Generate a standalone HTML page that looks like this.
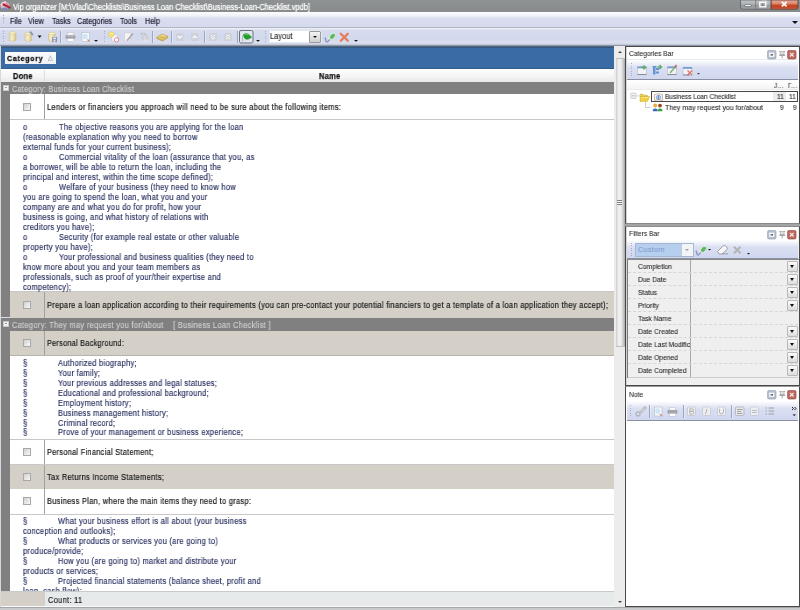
<!DOCTYPE html>
<html><head><meta charset="utf-8">
<style>
*{margin:0;padding:0;box-sizing:border-box}
html,body{width:800px;height:610px;overflow:hidden;background:#d9deee}
body{position:relative;font-family:"Liberation Sans",sans-serif;font-size:8.5px;color:#222}
.a{position:absolute}
.t{position:absolute;white-space:pre;line-height:10px;letter-spacing:.35px;transform:scaleX(.876);transform-origin:0 0;will-change:transform;-webkit-text-stroke:.18px currentColor}
/* title */
#title{left:0;top:0;width:800px;height:12px;background:linear-gradient(#8e9292,#878b8b)}
#menu{left:0;top:12px;width:800px;height:15px;background:linear-gradient(#fdfdfe 0,#f0f2f9 3.5px,#d8ddef 6.5px,#d4d9ed 15px)}
#tool{left:0;top:27px;width:800px;height:19.5px;background:linear-gradient(#b0b6c6 0,#b0b6c6 1px,#eceef6 1.5px,#d6dbee 3.5px,#d3d9ed 12px,#dcdff0 16px,#c4cad8 17.5px,#54657e 19.5px)}
.grip{position:absolute;width:1.2px;background:repeating-linear-gradient(#a4acc0 0 1px,transparent 1px 2.5px)}
.sep{position:absolute;width:1px;background:#9ea6ba;box-shadow:1px 0 0 rgba(255,255,255,.35)}
/* main */
#blue{left:1px;top:46.5px;width:613px;height:22.5px;background:#3a6ba4;border-top:1px solid #34587f;border-bottom:1px solid #325e90}
#hdr{left:1px;top:69px;width:613px;height:13px;background:linear-gradient(#fefefe,#f4f4f4 60%,#e9e9e9)}
.grp{position:absolute;left:1px;width:613px;height:13px;background:#808080;color:#cfcfcf}
.row{position:absolute;left:10px;width:604px;border-bottom:1px solid #c8c8c8}
.row .vl{position:absolute;left:34px;top:0;bottom:0;width:1px;background:#a0a0a0}
.cb{position:absolute;left:13px;width:8px;height:8px;border:1px solid #a8a8a8;background:linear-gradient(135deg,#d0d0d0,#f8f8f8)}
.notes{position:absolute;left:10px;width:604px;background:#fff;color:#2a3160}
.strip{position:absolute;left:1px;width:9px;background:#808080}
</style></head><body>

<!-- Title bar -->
<div id="title" class="a"></div>
<svg class="a" style="left:0;top:0" width="14" height="12">
<ellipse cx="5" cy="5.5" rx="4.5" ry="3.5" fill="#e8c8d8" opacity=".85"/>
<path d="M1 5 q2 -3 5 -3" stroke="#f4dce8" stroke-width="1.5" fill="none"/>
<path d="M3.5 4.5 l6 3" stroke="#a82838" stroke-width="2.2" stroke-linecap="round"/>
<path d="M6 3.5 l3.5 2" stroke="#e08088" stroke-width="1.2" stroke-linecap="round"/>
<ellipse cx="4.8" cy="8.6" rx="2.8" ry="1.2" fill="#7a88c8"/>
</svg>
<div class="t" style="left:13px;top:1.5px;font-size:8.5px;letter-spacing:0;transform:scaleX(.877);color:#fff;line-height:10px;text-shadow:0 0 2px rgba(255,255,255,.35)">Vip organizer [M:\Vlad\Checklists\Business Loan Checklist\Business-Loan-Checklist.vpdb]</div>
<svg class="a" style="left:736px;top:0" width="64" height="12">
<defs>
<linearGradient id="wb" x1="0" x2="0" y1="0" y2="1"><stop offset="0" stop-color="#c4c7c9"/><stop offset=".5" stop-color="#a9adb0"/><stop offset=".55" stop-color="#94989b"/><stop offset="1" stop-color="#a2a6a8"/></linearGradient>
<linearGradient id="wc" x1="0" x2="0" y1="0" y2="1"><stop offset="0" stop-color="#e8b0a2"/><stop offset=".45" stop-color="#d88068"/><stop offset=".55" stop-color="#c44422"/><stop offset=".85" stop-color="#c84a2a"/><stop offset="1" stop-color="#d87a5a"/></linearGradient>
</defs>
<path d="M4.5 0 v6.8 q0 2.4 2.4 2.4 h28.3 v-9.2 z" fill="url(#wb)" stroke="#5c6063" stroke-width=".8"/>
<path d="M35.2 0 v9.2 h24.6 q2.2 0 2.2 -2.2 v-7 z" fill="url(#wc)" stroke="#5a3830" stroke-width=".8"/>
<path d="M19.6 0 v9.2" stroke="#6a6e70" stroke-width=".7"/>
<rect x="8.8" y="4.6" width="6.2" height="2" rx=".6" fill="#fff" stroke="#4a4e52" stroke-width=".6"/>
<rect x="23.8" y="2.2" width="6" height="4.6" fill="none" stroke="#fff" stroke-width="1.3"/>
<path d="M25.3 1 h5.5 v4" fill="none" stroke="#dfe0e0" stroke-width=".7"/>
<path d="M26.8 3 v3" stroke="#666" stroke-width=".6"/>
<path d="M45.8 1.8 l4.8 4.6 M50.6 1.8 l-4.8 4.6" stroke="#fff" stroke-width="1.6"/>
</svg>

<!-- Menu -->
<div id="menu" class="a"></div>
<div class="grip" style="left:3px;top:15px;height:10px"></div>
<div class="t" style="left:9.6px;top:16px;font-size:8.5px;letter-spacing:0;transform:scaleX(.856);color:#1e1e2e">File</div>
<div class="t" style="left:28.3px;top:16px;font-size:8.5px;letter-spacing:0;transform:scaleX(.856);color:#1e1e2e">View</div>
<div class="t" style="left:51.6px;top:16px;font-size:8.5px;letter-spacing:0;transform:scaleX(.856);color:#1e1e2e">Tasks</div>
<div class="t" style="left:76.9px;top:16px;font-size:8.5px;letter-spacing:0;transform:scaleX(.856);color:#1e1e2e">Categories</div>
<div class="t" style="left:119.6px;top:16px;font-size:8.5px;letter-spacing:0;transform:scaleX(.856);color:#1e1e2e">Tools</div>
<div class="t" style="left:145px;top:16px;font-size:8.5px;letter-spacing:0;transform:scaleX(.856);color:#1e1e2e">Help</div>
<div class="a" style="left:792px;top:21px;width:0;height:0;border-left:3px solid transparent;border-right:3px solid transparent;border-top:3px solid #111"></div>

<!-- Toolbar -->
<div id="tool" class="a"></div>
<div class="grip" style="left:3px;top:31px;height:12px"></div>
<div class="grip" style="left:104px;top:31px;height:12px"></div>
<div class="grip" style="left:265px;top:31px;height:12px"></div>
<div class="sep" style="left:60px;top:31px;height:12px"></div>
<div class="sep" style="left:152px;top:31px;height:12px"></div>
<div class="sep" style="left:171px;top:31px;height:12px"></div>
<div class="sep" style="left:204px;top:31px;height:12px"></div>
<div class="sep" style="left:237px;top:31px;height:12px"></div>
<svg class="a" style="left:0;top:0" width="800" height="46">
<defs>
<linearGradient id="db" x1="0" x2="1" y1="0" y2="0"><stop offset="0" stop-color="#e4d69c"/><stop offset=".4" stop-color="#fcf6d0"/><stop offset="1" stop-color="#d4bc70"/></linearGradient>
<linearGradient id="gb" x1="0" x2="0" y1="0" y2="1"><stop offset="0" stop-color="#e8e8ea"/><stop offset="1" stop-color="#b8bac2"/></linearGradient>
<linearGradient id="pg" x1="0" x2="1" y1="0" y2="1"><stop offset="0" stop-color="#fff"/><stop offset="1" stop-color="#b8d8f0"/></linearGradient>
</defs>
<!-- db 1 -->
<g opacity=".9">
<path d="M9.3 33 v7.3 q3.3 2 6.6 0 v-7.3" fill="url(#db)" stroke="#c8b474" stroke-width=".5"/>
<ellipse cx="12.6" cy="33" rx="3.3" ry="1.3" fill="#fbf4c4" stroke="#c8b474" stroke-width=".5"/>
<path d="M9.5 35.8 q3.1 1.6 6.2 0 M9.5 38.3 q3.1 1.6 6.2 0" stroke="#e8d8a0" stroke-width=".5" fill="none"/>
<!-- db 2 -->
<path d="M25 33.5 v7 q3.3 2 6.6 0 v-7" fill="url(#db)" stroke="#c8b474" stroke-width=".5"/>
<ellipse cx="28.3" cy="33.5" rx="3.3" ry="1.3" fill="#fbf4c4" stroke="#c8b474" stroke-width=".5"/>
<path d="M25.2 36.3 q3.1 1.6 6.2 0 M25.2 38.8 q3.1 1.6 6.2 0" stroke="#e8d8a0" stroke-width=".5" fill="none"/>
<path d="M29.5 32.3 l1.2 -1 l2.6 3 l-1.1 1 z" fill="#7a94c0" stroke="#5a6a90" stroke-width=".3"/>
</g>
<path d="M37.6 35.5 h4 l-2 2.5 z" fill="#111"/>
<!-- db save -->
<g opacity=".9">
<path d="M48.5 33.5 v7 q3.3 2 6.6 0 v-7" fill="url(#db)" stroke="#c8b474" stroke-width=".5"/>
<ellipse cx="51.8" cy="33.5" rx="3.3" ry="1.3" fill="#fbf4c4" stroke="#c8b474" stroke-width=".5"/>
<path d="M48.7 36.3 q3.1 1.6 6.2 0 M48.7 38.8 q3.1 1.6 6.2 0" stroke="#e8d8a0" stroke-width=".5" fill="none"/>
<rect x="52.3" y="37.3" width="4.6" height="4.6" fill="#8a90b8" stroke="#6a7098" stroke-width=".4"/><rect x="53.2" y="37.6" width="2.8" height="1.6" fill="#e8e8f4"/><rect x="53.6" y="40.2" width="1.8" height="1.4" fill="#fff"/>
</g>
<!-- printer -->
<rect x="67.3" y="32.5" width="6.4" height="3" fill="#fbfbfb" stroke="#b8b8c0" stroke-width=".5"/>
<rect x="65.8" y="35.3" width="9.4" height="3.2" rx=".8" fill="#9a9ca4" stroke="#8a8c94" stroke-width=".4"/>
<rect x="66.2" y="35.5" width="8.6" height="1" fill="#c8cad0"/>
<rect x="67.3" y="38.5" width="6.4" height="3" fill="#fff" stroke="#b8b8c0" stroke-width=".5"/>
<!-- page preview -->
<rect x="82" y="32.5" width="7.5" height="9" fill="#f4f8fc" stroke="#a8b4c0" stroke-width=".5"/>
<ellipse cx="85.2" cy="36.5" rx="2.5" ry="2.8" fill="#cfe4f4"/>
<path d="M87.5 39.5 l2 2" stroke="#d09060" stroke-width="1.2"/>
<path d="M94 40 h4 l-2 1.8 z" fill="#111"/>
<!-- new category -->
<rect x="112" y="35" width="5" height="6" fill="#fff" stroke="#c0c8d8" stroke-width=".5"/>
<circle cx="111.3" cy="34.5" r="2.8" fill="#f4e07a" stroke="#d8c050" stroke-width=".4"/>
<path d="M109.5 34 q2 -1.5 3.5 0" stroke="#fff8c0" stroke-width=".8" fill="none"/>
<circle cx="116.5" cy="39.8" r="2.2" fill="#fff" stroke="#e08898" stroke-width="1"/>
<!-- edit grayed -->
<rect x="124.5" y="33" width="6" height="8" fill="#f4f4f4" stroke="#c8c8cc" stroke-width=".5"/>
<path d="M126.5 40 l6 -7 l1.2 1 l-6 7 z" fill="#a8a8ac"/>
<!-- grayed icon -->
<path d="M140.5 34.5 l2 -1.5 M143.5 33 l2 1" stroke="#b8b8bc" stroke-width="1.2"/>
<circle cx="145" cy="37.5" r="2.6" fill="#d8d8dc" stroke="#b4b4b8" stroke-width=".6"/>
<ellipse cx="145" cy="40.5" rx="2.2" ry="1.2" fill="#e4e4e8"/>
<!-- yellow layered -->
<path d="M157 37 l5 -3 l5.5 2.2 l-5 3.2 z" fill="#f0dc88" stroke="#b89848" stroke-width=".6"/>
<path d="M157 37 v1.5 l5.5 2.5 l5 -3.2 v-1.6" fill="#dcc060" stroke="#a88838" stroke-width=".6"/>
<path d="M159.5 36 l5 2" stroke="#c0a050" stroke-width=".5"/>
<!-- chevron boxes -->
<rect x="176" y="33" width="7.5" height="8" rx="1.5" fill="#cfd1d8"/>
<path d="M177.8 36 l2 2 l2 -2" fill="none" stroke="#fff" stroke-width="1.1"/>
<rect x="191" y="33" width="7.5" height="8" rx="1.5" fill="#cfd1d8"/>
<path d="M192.8 38 l2 -2 l2 2" fill="none" stroke="#fff" stroke-width="1.1"/>
<rect x="209" y="33" width="8" height="8" rx="1.5" fill="#cfd1d8"/>
<path d="M211 35 l2 1.6 l2 -1.6 M211 37.5 l2 1.6 l2 -1.6" fill="none" stroke="#fff" stroke-width=".9"/>
<rect x="224" y="33" width="8" height="8" rx="1.5" fill="#cfd1d8"/>
<path d="M226 36.6 l2 -1.6 l2 1.6 M226 39.1 l2 -1.6 l2 1.6" fill="none" stroke="#fff" stroke-width=".9"/>
<!-- pressed button -->
<rect x="239.5" y="30.5" width="13.5" height="12.5" rx="1.5" fill="#e2e6ee" stroke="#6c7080" stroke-width="1"/>
<path d="M242.6 41.5 v-5 q0 -1.5 1.2 -2" stroke="#a8b0a8" stroke-width=".9" fill="none"/>
<path d="M243.5 34.5 q2.5 -2 5 -.2 l3.3 3 q-1.5 .8 -3.2 1.8 q-1.8 .6 -3.4 -.3 q-1.8 -1.5 -1.7 -4.3 z" fill="#20a028" stroke="#187a20" stroke-width=".4"/>
<path d="M244.5 34.8 q2 -1.2 3.8 .2" stroke="#80d888" stroke-width=".8" fill="none"/>
<path d="M256 40 h4 l-2 1.8 z" fill="#111"/>
<!-- key/pen -->
<g transform="translate(323,28)"><path d="M2 9.5 l1.2 4 q.5 1 1.5 .3 l2.5 -3" fill="none" stroke="#8890b8" stroke-width="1.3"/>
<path d="M5.5 9.5 l2 2" stroke="#e8ecf4" stroke-width="1.2"/>
<ellipse cx="9.5" cy="8.3" rx="2.3" ry="3.6" transform="rotate(40 9.5 8.3)" fill="#5cb860" stroke="#e0f0e0" stroke-width=".8"/>
<path d="M9 5.5 q1.5 -1 2.8 .5" stroke="#d8e8f0" stroke-width=".9" fill="none"/></g>
<!-- red x -->
<path d="M340.8 33.8 l7 7 M347.8 33.8 l-7 7" stroke="#e87a5c" stroke-width="2.3" stroke-linecap="round"/>
<path d="M354 40 h4 l-2 1.8 z" fill="#111"/>
</svg>
<div class="a" style="left:268.5px;top:30.2px;width:53px;height:12.6px;background:#fff;border:1px solid #e4e8f2"></div>
<div class="t" style="left:270px;top:31.8px;font-size:8.2px;letter-spacing:.2px;color:#333">Layout</div>
<div class="a" style="left:309px;top:30.5px;width:12px;height:12px;background:linear-gradient(#f4f4f4,#d0d0d0);border:1px solid #9a9a9a;border-radius:1px"></div>
<div class="a" style="left:313px;top:35.5px;width:0;height:0;border-left:2.2px solid transparent;border-right:2.2px solid transparent;border-top:2.6px solid #111"></div>

<!-- Main grid -->
<div class="a" style="left:0;top:46px;width:1.2px;height:561px;background:#d8d8d8"></div>
<div id="blue" class="a"></div>
<div class="a" style="left:5px;top:52px;width:51px;height:12px;background:linear-gradient(#f8fafc,#eef1f5);"></div>
<div class="t" style="left:6.5px;top:53.5px;font-weight:bold;font-size:8px;letter-spacing:.85px;color:#111;-webkit-text-stroke:.3px #111">Category</div>
<div class="t" style="left:47.5px;top:53px;font-size:7px;color:#9aa">△</div>
<div id="hdr" class="a"></div>
<div class="a" style="left:44px;top:70px;width:1px;height:11px;background:#dcdcdc"></div>
<div class="t" style="left:12.5px;top:71px;font-weight:bold;font-size:8.5px;color:#111;-webkit-text-stroke:.25px #111">Done</div>
<div class="t" style="left:318.8px;top:71px;font-weight:bold;font-size:8.5px;color:#111;-webkit-text-stroke:.25px #111">Name</div>

<!-- group 1 -->
<div class="grp" style="top:82px"></div>
<div class="a" style="left:3px;top:85px;width:5.5px;height:5.5px;background:#f2f2f2;border:.6px solid #c8c8c8"></div>
<div class="a" style="left:4.5px;top:87.3px;width:2.5px;height:1px;background:#999"></div>
<div class="t" style="left:12px;top:84px;transform:scaleX(.853);color:#cdcdcd">Category: Business Loan Checklist</div>
<div class="strip" style="top:94px;height:223px"></div>

<div class="row" style="top:94px;height:26px;background:#fff"><div class="vl"></div></div>
<div class="cb" style="top:103px;left:23px"></div>
<div class="t" style="left:46.5px;top:102.0px;color:#151515">Lenders or financiers you approach will need to be sure about the following items:</div>

<div class="notes" style="top:120px;height:172px;border-bottom:1px solid #c8c8c8"></div>
<div class="t" style="left:23.3px;top:121.5px;line-height:9.98px;color:#2a3160">o
(reasonable explanation why you need to borrow
external funds for your current business);
o
a borrower, will be able to return the loan, including the
principal and interest, within the time scope defined);
o
you are going to spend the loan, what you and your
company are and what you do for profit, how your
business is going, and what history of relations with
creditors you have);
o
property you have);
o
know more about you and your team members as
professionals, such as proof of your/their expertise and
competency);</div>
<div class="t" style="left:58.5px;top:121.5px;line-height:9.98px;color:#2a3160">The objective reasons you are applying for the loan


Commercial vitality of the loan (assurance that you, as


Welfare of your business (they need to know how




Security (for example real estate or other valuable

Your professional and business qualities (they need to</div>

<div class="row" style="top:292px;height:26px;background:#d4d0c8;border-bottom:none"><div class="vl"></div></div>
<div class="cb" style="top:301px;left:23px"></div>
<div class="t" style="left:46.5px;top:300.0px;color:#151515">Prepare a loan application according to their requirements (you can pre-contact your potential financiers to get a template of a loan application they accept);</div>

<!-- group 2 -->
<div class="grp" style="top:317.5px"></div>
<div class="a" style="left:3px;top:321px;width:5.5px;height:5.5px;background:#f2f2f2;border:.6px solid #c8c8c8"></div>
<div class="a" style="left:4.5px;top:323.3px;width:2.5px;height:1px;background:#999"></div>
<div class="t" style="left:12px;top:320px;color:#cdcdcd">Category: They may request you for/about    [ Business Loan Checklist ]</div>
<div class="strip" style="top:330.5px;height:260px"></div>

<div class="row" style="top:330.5px;height:25px;background:#d4d0c8;border-bottom:1px solid #b8b4ac"><div class="vl"></div></div>
<div class="cb" style="top:339px;left:23px"></div>
<div class="t" style="left:46.5px;top:338.0px;transform:scaleX(.851);color:#151515">Personal Background:</div>

<div class="notes" style="top:355.5px;height:84px;border-bottom:1px solid #c8c8c8"></div>
<div class="t" style="left:23.3px;top:358.5px;line-height:9.92px;color:#2a3160">§
§
§
§
§
§
§
§</div>
<div class="t" style="left:58px;top:358.5px;line-height:9.92px;color:#2a3160">Authorized biography;
Your family;
Your previous addresses and legal statuses;
Educational and professional background;
Employment history;
Business management history;
Criminal record;
Prove of your management or business experience;</div>

<div class="row" style="top:439.5px;height:25px;background:#fff"><div class="vl"></div></div>
<div class="cb" style="top:448px;left:23px"></div>
<div class="t" style="left:46.5px;top:447.0px;transform:scaleX(.864);color:#151515">Personal Financial Statement;</div>

<div class="row" style="top:464.5px;height:24.5px;background:#d4d0c8;border-bottom:none"><div class="vl"></div></div>
<div class="cb" style="top:472.5px;left:23px"></div>
<div class="t" style="left:46.5px;top:471.5px;color:#151515">Tax Returns Income Statements;</div>

<div class="row" style="top:489px;height:25.5px;background:#fff"><div class="vl"></div></div>
<div class="cb" style="top:497px;left:23px"></div>
<div class="t" style="left:46.5px;top:496.0px;transform:scaleX(.874);color:#151515">Business Plan, where the main items they need to grasp:</div>

<div class="notes" style="top:514.5px;height:76px;overflow:hidden">
<div class="t" style="left:13.3px;top:2.5px;line-height:9.95px;color:#2a3160">§
conception and outlooks);
§
produce/provide;
§
products or services;
§
loan, cash flow);</div>
<div class="t" style="left:48px;top:2.5px;line-height:9.95px;color:#2a3160">What your business effort is all about (your business

What products or services you (are going to)

How you (are going to) market and distribute your

Projected financial statements (balance sheet, profit and</div>
</div>

<!-- footer -->
<div class="a" style="left:1px;top:591px;width:613px;height:16px;background:#e6eaea;border-top:1px solid #c6caca;border-bottom:1px solid #fafafa"></div>
<div class="a" style="left:1px;top:592px;width:44px;height:14px;background:#d4d0c8"></div>
<div class="t" style="left:47.5px;top:595px;color:#222">Count: 11</div>
<div class="a" style="left:0;top:607px;width:800px;height:3px;background:linear-gradient(#a4a6a8 0,#a4a6a8 1px,#c8cacb 1px)"></div>

<!-- scrollbar -->
<div class="a" style="left:614px;top:46px;width:11px;height:561px;background:#ececec"></div>
<div class="a" style="left:618px;top:50.5px;width:0;height:0;border-left:2.5px solid transparent;border-right:2.5px solid transparent;border-bottom:2.5px solid #444"></div>
<div class="a" style="left:615.5px;top:58.3px;width:9px;height:289px;background:linear-gradient(90deg,#cfcfcf,#f4f4f4 35%,#e2e2e2 65%,#a8a8a8);border-top:1px solid #c0c0c0;border-bottom:1px solid #c0c0c0"></div>
<div class="a" style="left:617px;top:200px;width:4.5px;height:5px;background:repeating-linear-gradient(#808080 0 1px,#f8f8f8 1px 2px)"></div>
<div class="a" style="left:618px;top:600.5px;width:0;height:0;border-left:2.5px solid transparent;border-right:2.5px solid transparent;border-top:2.5px solid #444"></div>

<!-- right panels -->
<div class="a" style="left:625px;top:46px;width:175px;height:561px;background:#a2a4a6"></div>

<!-- categories bar -->
<div class="a" style="left:625px;top:45.8px;width:175px;height:178.2px;background:#fff;border:1px solid #484848;border-bottom-color:#8a8a8a;border-width:1px 1.5px 1.2px 1.2px;box-shadow:inset 1px 0 0 #d4d4d4"></div>
<div class="a" style="left:627px;top:59px;width:171px;height:1px;background:#e8eaf0"></div>
<div class="t" style="left:629px;top:49px;font-size:7.2px;-webkit-text-stroke:.05px currentColor;letter-spacing:0;transform:scaleX(.93);color:#1a1a1a">Categories Bar</div>
<svg class="a" style="left:760px;top:49.5px" width="40" height="12">
<rect x="7.6" y="0.4" width="8.4" height="8.6" rx="1.3" fill="#b6bfcc" stroke="#98a2b2" stroke-width=".7"/>
<rect x="9.6" y="3" width="4.4" height="3.6" fill="#f4f6f8" stroke="#fff" stroke-width=".6"/>
<rect x="10.6" y="4.2" width="2.4" height="1.3" fill="#404850"/>
<path d="M19.3 1.6 h5.8" stroke="#9a9a9a" stroke-width="1"/>
<path d="M20.4 1.6 v3.4 h3.6 v-3.4" fill="#e4e4e4" stroke="#a8a8a8" stroke-width=".7"/>
<path d="M19.2 5.2 h6" stroke="#808080" stroke-width=".9"/>
<path d="M22.2 5.2 v3.2" stroke="#9a9a9a" stroke-width=".9"/>
<rect x="27.6" y="0.4" width="8.4" height="8.6" rx="1.3" fill="#bb6a62" stroke="#9c5048" stroke-width=".7"/>
<path d="M30 2.9 l3.6 3.6 M33.6 2.9 l-3.6 3.6" stroke="#f8e8e8" stroke-width="1.2"/>
</svg>
<div class="a" style="left:627px;top:60px;width:171px;height:19.5px;background:linear-gradient(#ffffff 0,#f4f6fb 12%,#dadff2 40%,#d0d7ef 100%);border-bottom:1px solid #8890a2"></div>
<div class="grip" style="left:631px;top:63px;height:14px"></div>
<svg class="a" style="left:626px;top:58px;opacity:.8" width="80" height="22">
<rect x="11.5" y="9" width="9" height="7.5" fill="#f8f8fa" stroke="#9aa4b0" stroke-width=".5"/><rect x="11.5" y="8.5" width="9" height="1.8" fill="#5a8ac8"/><rect x="11.5" y="16" width="9" height="1" fill="#707880"/>
<path d="M15.5 9.5 h3.5 M17.5 7.5 l2 2 l-2 2" stroke="#3aa040" stroke-width="1.3" fill="none"/>
<rect x="27" y="9" width="2.5" height="7.5" fill="#4a80c8"/><rect x="30" y="10" width="3" height="2" fill="#4a80c8"/><rect x="30" y="13.5" width="3" height="2" fill="#4a80c8"/><rect x="26.5" y="8" width="4" height="1.5" fill="#4a80c8"/>
<path d="M31.5 9 h3.5 M33.5 7 l2 2 l-2 2" stroke="#3aa040" stroke-width="1.3" fill="none"/>
<rect x="41.5" y="9" width="9" height="7.5" fill="#f8f8fa" stroke="#9aa4b0" stroke-width=".5"/><rect x="41.5" y="8.5" width="9" height="1.8" fill="#5a8ac8"/><rect x="41.5" y="16" width="9" height="1" fill="#707880"/>
<path d="M44 15 l6.5 -7.5" stroke="#68a848" stroke-width="1.4"/><path d="M48.5 9.5 l2 -2.5" stroke="#c84848" stroke-width="1.4"/>
<rect x="57" y="9.5" width="9" height="7.5" fill="#f8f8fa" stroke="#9aa4b0" stroke-width=".5"/><rect x="57" y="9" width="9" height="1.8" fill="#5a8ac8"/><rect x="57" y="16.5" width="7" height="1" fill="#707880"/>
<path d="M61.5 12.5 l4.5 4.5 M66 12.5 l-4.5 4.5" stroke="#e05040" stroke-width="1.1"/>
<path d="M71 15 h3 l-1.5 1.5 z" fill="#111"/>
</svg>
<div class="a" style="left:627px;top:80px;width:171px;height:10px;background:linear-gradient(#fff,#f3f3f3)"></div>
<div class="a" style="left:627px;top:89.3px;width:171px;height:1px;background:#ececec"></div>

<div class="t" style="left:774px;top:81px;font-size:7.2px;-webkit-text-stroke:.05px currentColor;color:#333">J...</div>
<div class="t" style="left:787.5px;top:81px;font-size:7.2px;-webkit-text-stroke:.05px currentColor;color:#333">Γ...</div>
<div class="a" style="left:651px;top:90.5px;width:147px;height:11px;border:1px solid #484848;background:#fff"></div>
<div class="a" style="left:773px;top:91.5px;width:13px;height:9px;background:#ececec"></div>
<div class="t" style="left:664.8px;top:92px;font-size:7.3px;-webkit-text-stroke:.08px currentColor;letter-spacing:0;transform:scaleX(.89);color:#222">Business Loan Checklist</div>
<div class="t" style="left:777px;top:92px;font-size:7.3px;-webkit-text-stroke:.08px currentColor;color:#222">11</div>
<div class="t" style="left:789px;top:92px;font-size:7.3px;-webkit-text-stroke:.08px currentColor;color:#222">11</div>
<div class="t" style="left:665px;top:103px;font-size:7.3px;-webkit-text-stroke:.08px currentColor;letter-spacing:0;transform:scaleX(.95);color:#222">They may request you for/about</div>
<div class="t" style="left:780px;top:103px;font-size:7.3px;-webkit-text-stroke:.08px currentColor;color:#222">9</div>
<div class="t" style="left:793px;top:103px;font-size:7.3px;-webkit-text-stroke:.08px currentColor;color:#222">9</div>
<svg class="a" style="left:626px;top:86px" width="40" height="30">
<rect x="4.8" y="7.2" width="5.2" height="5.2" rx=".6" fill="#f8f8f8" stroke="#b4b4b4" stroke-width=".7"/>
<path d="M6.2 9.8 h2.4" stroke="#999" stroke-width=".8"/>
<path d="M10.2 9.8 h3.5" stroke="#c8c8c8" stroke-width=".6"/>
<path d="M14 8 h2.8 l1 1 h3.5 v2 h-7.3 z" fill="#e8d060" stroke="#c8a830" stroke-width=".4"/>
<path d="M14 10.5 h9.5 l-2 5 h-7.5 z" fill="#f0d040" stroke="#c8a020" stroke-width=".4"/>
<path d="M15 11.5 h7" stroke="#fff0a0" stroke-width=".7"/>
<path d="M28.5 8.5 q4 -1.5 8 0 v6 q-4 -1.5 -8 0 z" fill="#f6f8fc" stroke="#c89868" stroke-width=".7"/>
<circle cx="32.5" cy="11.5" r="2.2" fill="#b8d0f0" stroke="#5a88c8" stroke-width=".6"/>
<path d="M32.5 9.3 v4.4" stroke="#4878c0" stroke-width=".7"/>
<path d="M19.5 16 v5.5 h5" stroke="#b8b8b8" stroke-width=".7" fill="none"/>
<circle cx="29.2" cy="19.5" r="1.9" fill="#e8a838"/><path d="M26.8 25.2 v-1.5 q2.4 -2.6 4.8 0 v1.5 z" fill="#3a62c0"/>
<circle cx="34" cy="19.6" r="1.9" fill="#904a28"/><path d="M31.6 25.2 v-1.5 q2.4 -2.6 4.8 0 v1.5 z" fill="#38a040"/>
</svg>

<!-- filters bar -->
<div class="a" style="left:625px;top:226.3px;width:175px;height:159.7px;background:#efefef;border:1px solid #484848;border-top-color:#8c8c8c;border-width:1px 1.5px 1.5px 1.2px;box-shadow:inset 1px 0 0 #d4d4d4"></div>
<div class="a" style="left:627px;top:227px;width:171px;height:13px;background:#fff"></div>
<div class="a" style="left:627px;top:239.5px;width:171px;height:1px;background:#e8eaf0"></div>
<div class="t" style="left:629px;top:228.7px;font-size:7.2px;-webkit-text-stroke:.05px currentColor;letter-spacing:0;transform:scaleX(.93);color:#1a1a1a">Filters Bar</div>
<svg class="a" style="left:760px;top:229.5px" width="40" height="12">
<rect x="7.6" y="0.4" width="8.4" height="8.6" rx="1.3" fill="#b6bfcc" stroke="#98a2b2" stroke-width=".7"/>
<rect x="9.6" y="3" width="4.4" height="3.6" fill="#f4f6f8" stroke="#fff" stroke-width=".6"/>
<rect x="10.6" y="4.2" width="2.4" height="1.3" fill="#404850"/>
<path d="M19.3 1.6 h5.8" stroke="#9a9a9a" stroke-width="1"/>
<path d="M20.4 1.6 v3.4 h3.6 v-3.4" fill="#e4e4e4" stroke="#a8a8a8" stroke-width=".7"/>
<path d="M19.2 5.2 h6" stroke="#808080" stroke-width=".9"/>
<path d="M22.2 5.2 v3.2" stroke="#9a9a9a" stroke-width=".9"/>
<rect x="27.6" y="0.4" width="8.4" height="8.6" rx="1.3" fill="#bb6a62" stroke="#9c5048" stroke-width=".7"/>
<path d="M30 2.9 l3.6 3.6 M33.6 2.9 l-3.6 3.6" stroke="#f8e8e8" stroke-width="1.2"/>
</svg>
<div class="a" style="left:627px;top:240px;width:171px;height:19px;background:linear-gradient(#ffffff 0,#f4f6fb 12%,#dadff2 40%,#d0d7ef 100%);border-bottom:1px solid #8890a2"></div>
<div class="grip" style="left:631px;top:243px;height:14px"></div>
<div class="a" style="left:635px;top:243px;width:59px;height:14px;background:#b6cfee;border:1px solid #a4b8d4"></div>
<div class="a" style="left:681px;top:244px;width:12px;height:12px;background:#f2f4f8;border-left:1px solid #c4cad8"></div>
<div class="a" style="left:685px;top:249px;width:0;height:0;border-left:2px solid transparent;border-right:2px solid transparent;border-top:2.5px solid #a0a0a0"></div>
<div class="t" style="left:637.5px;top:245px;font-size:8px;-webkit-text-stroke:.08px currentColor;letter-spacing:.2px;transform:scaleX(.93);color:#7e9acc">Custom</div>
<svg class="a" style="left:694px;top:240px" width="60" height="20">
<g transform="translate(0,1)"><path d="M2 9.5 l1.2 4 q.5 1 1.5 .3 l2.5 -3" fill="none" stroke="#8890b8" stroke-width="1.3"/>
<path d="M5.5 9.5 l2 2" stroke="#e8ecf4" stroke-width="1.2"/>
<ellipse cx="9.5" cy="8.3" rx="2.3" ry="3.6" transform="rotate(40 9.5 8.3)" fill="#5cb860" stroke="#e0f0e0" stroke-width=".8"/>
<path d="M9 5.5 q1.5 -1 2.8 .5" stroke="#d8e8f0" stroke-width=".9" fill="none"/></g>
<path d="M14 9 h3 l-1.5 1.6 z" fill="#111"/>
<path d="M23.5 11.5 l5.5 -5.5 q1.3 -1.1 2.6 0 l1.3 1.2 q1 1.2 0 2.3 l-4.7 4.5 h-3 z" fill="#f6f6f6" stroke="#8c8c8c" stroke-width=".8"/>
<path d="M28 13.8 h6" stroke="#8c8c8c" stroke-width=".8"/>
<path d="M40 6.8 l6.5 6.5 M46.5 6.8 l-6.5 6.5" stroke="#b4b4b4" stroke-width="2"/>
<path d="M53 13 h3 l-1.5 1.6 z" fill="#111"/>
</svg>
<div class="a" style="left:627px;top:259px;width:171.5px;height:118.5px;border-top:1px solid #8a8a8a;border-left:1.2px solid #7a7a7a"></div>
<div class="a" style="left:689.5px;top:260px;width:1px;height:117px;background:#a8a8a8"></div>
<div class="a" style="left:628px;top:272.0px;width:170px;height:0;border-top:1px dashed #d6d6d6"></div>
<div class="t" style="left:638px;top:261.5px;font-size:7.3px;-webkit-text-stroke:.08px currentColor;letter-spacing:0;transform:scaleX(.92);color:#1e1e1e;width:56px;overflow:hidden">Completion</div>
<div class="a" style="left:787px;top:260.5px;width:10.5px;height:11.5px;background:linear-gradient(#fbfbfb,#dcdcdc);border:1px solid #b8b8b8;border-radius:1px"></div>
<div class="a" style="left:790px;top:265.0px;width:0;height:0;border-left:2.5px solid transparent;border-right:2.5px solid transparent;border-top:3px solid #111"></div>
<div class="a" style="left:628px;top:285.0px;width:170px;height:0;border-top:1px dashed #d6d6d6"></div>
<div class="t" style="left:638px;top:274.5px;font-size:7.3px;-webkit-text-stroke:.08px currentColor;letter-spacing:0;transform:scaleX(.92);color:#1e1e1e;width:56px;overflow:hidden">Due Date</div>
<div class="a" style="left:787px;top:273.5px;width:10.5px;height:11.5px;background:linear-gradient(#fbfbfb,#dcdcdc);border:1px solid #b8b8b8;border-radius:1px"></div>
<div class="a" style="left:790px;top:278.0px;width:0;height:0;border-left:2.5px solid transparent;border-right:2.5px solid transparent;border-top:3px solid #111"></div>
<div class="a" style="left:628px;top:298.0px;width:170px;height:0;border-top:1px dashed #d6d6d6"></div>
<div class="t" style="left:638px;top:287.5px;font-size:7.3px;-webkit-text-stroke:.08px currentColor;letter-spacing:0;transform:scaleX(.92);color:#1e1e1e;width:56px;overflow:hidden">Status</div>
<div class="a" style="left:787px;top:286.5px;width:10.5px;height:11.5px;background:linear-gradient(#fbfbfb,#dcdcdc);border:1px solid #b8b8b8;border-radius:1px"></div>
<div class="a" style="left:790px;top:291.0px;width:0;height:0;border-left:2.5px solid transparent;border-right:2.5px solid transparent;border-top:3px solid #111"></div>
<div class="a" style="left:628px;top:311.0px;width:170px;height:0;border-top:1px dashed #d6d6d6"></div>
<div class="t" style="left:638px;top:300.5px;font-size:7.3px;-webkit-text-stroke:.08px currentColor;letter-spacing:0;transform:scaleX(.92);color:#1e1e1e;width:56px;overflow:hidden">Priority</div>
<div class="a" style="left:787px;top:299.5px;width:10.5px;height:11.5px;background:linear-gradient(#fbfbfb,#dcdcdc);border:1px solid #b8b8b8;border-radius:1px"></div>
<div class="a" style="left:790px;top:304.0px;width:0;height:0;border-left:2.5px solid transparent;border-right:2.5px solid transparent;border-top:3px solid #111"></div>
<div class="a" style="left:628px;top:324.0px;width:170px;height:0;border-top:1px dashed #d6d6d6"></div>
<div class="t" style="left:638px;top:313.5px;font-size:7.3px;-webkit-text-stroke:.08px currentColor;letter-spacing:0;transform:scaleX(.92);color:#1e1e1e;width:56px;overflow:hidden">Task Name</div>
<div class="a" style="left:628px;top:337.0px;width:170px;height:0;border-top:1px dashed #d6d6d6"></div>
<div class="t" style="left:638px;top:326.5px;font-size:7.3px;-webkit-text-stroke:.08px currentColor;letter-spacing:0;transform:scaleX(.92);color:#1e1e1e;width:56px;overflow:hidden">Date Created</div>
<div class="a" style="left:787px;top:325.5px;width:10.5px;height:11.5px;background:linear-gradient(#fbfbfb,#dcdcdc);border:1px solid #b8b8b8;border-radius:1px"></div>
<div class="a" style="left:790px;top:330.0px;width:0;height:0;border-left:2.5px solid transparent;border-right:2.5px solid transparent;border-top:3px solid #111"></div>
<div class="a" style="left:628px;top:350.0px;width:170px;height:0;border-top:1px dashed #d6d6d6"></div>
<div class="t" style="left:638px;top:339.5px;font-size:7.3px;-webkit-text-stroke:.08px currentColor;letter-spacing:0;transform:scaleX(.92);color:#1e1e1e;width:56px;overflow:hidden">Date Last Modific</div>
<div class="a" style="left:787px;top:338.5px;width:10.5px;height:11.5px;background:linear-gradient(#fbfbfb,#dcdcdc);border:1px solid #b8b8b8;border-radius:1px"></div>
<div class="a" style="left:790px;top:343.0px;width:0;height:0;border-left:2.5px solid transparent;border-right:2.5px solid transparent;border-top:3px solid #111"></div>
<div class="a" style="left:628px;top:363.0px;width:170px;height:0;border-top:1px dashed #d6d6d6"></div>
<div class="t" style="left:638px;top:352.5px;font-size:7.3px;-webkit-text-stroke:.08px currentColor;letter-spacing:0;transform:scaleX(.92);color:#1e1e1e;width:56px;overflow:hidden">Date Opened</div>
<div class="a" style="left:787px;top:351.5px;width:10.5px;height:11.5px;background:linear-gradient(#fbfbfb,#dcdcdc);border:1px solid #b8b8b8;border-radius:1px"></div>
<div class="a" style="left:790px;top:356.0px;width:0;height:0;border-left:2.5px solid transparent;border-right:2.5px solid transparent;border-top:3px solid #111"></div>
<div class="a" style="left:628px;top:376.5px;width:170px;height:0;border-top:1px solid #cccccc"></div>
<div class="t" style="left:638px;top:365.5px;font-size:7.3px;-webkit-text-stroke:.08px currentColor;letter-spacing:0;transform:scaleX(.92);color:#1e1e1e;width:56px;overflow:hidden">Date Completed</div>
<div class="a" style="left:787px;top:364.5px;width:10.5px;height:11.5px;background:linear-gradient(#fbfbfb,#dcdcdc);border:1px solid #b8b8b8;border-radius:1px"></div>
<div class="a" style="left:790px;top:369.0px;width:0;height:0;border-left:2.5px solid transparent;border-right:2.5px solid transparent;border-top:3px solid #111"></div>


<!-- note panel -->
<div class="a" style="left:625px;top:386px;width:175px;height:221.3px;background:#fff;border:1px solid #484848;border-top-color:#9a9a9a;border-width:.6px 1.5px 1px 1.2px"></div>
<div class="t" style="left:629px;top:390px;font-size:7.2px;-webkit-text-stroke:.05px currentColor;letter-spacing:0;transform:scaleX(.93);color:#1a1a1a">Note</div>
<svg class="a" style="left:760px;top:390.0px" width="40" height="12">
<rect x="7.6" y="0.4" width="8.4" height="8.6" rx="1.3" fill="#b6bfcc" stroke="#98a2b2" stroke-width=".7"/>
<rect x="9.6" y="3" width="4.4" height="3.6" fill="#f4f6f8" stroke="#fff" stroke-width=".6"/>
<rect x="10.6" y="4.2" width="2.4" height="1.3" fill="#404850"/>
<path d="M19.3 1.6 h5.8" stroke="#9a9a9a" stroke-width="1"/>
<path d="M20.4 1.6 v3.4 h3.6 v-3.4" fill="#e4e4e4" stroke="#a8a8a8" stroke-width=".7"/>
<path d="M19.2 5.2 h6" stroke="#808080" stroke-width=".9"/>
<path d="M22.2 5.2 v3.2" stroke="#9a9a9a" stroke-width=".9"/>
<rect x="27.6" y="0.4" width="8.4" height="8.6" rx="1.3" fill="#bb6a62" stroke="#9c5048" stroke-width=".7"/>
<path d="M30 2.9 l3.6 3.6 M33.6 2.9 l-3.6 3.6" stroke="#f8e8e8" stroke-width="1.2"/>
</svg>
<div class="a" style="left:627px;top:400.5px;width:171px;height:20px;background:linear-gradient(#ffffff 0,#f4f6fb 12%,#dadff2 40%,#d0d7ef 100%);border-bottom:1px solid #8890a2"></div>
<div class="grip" style="left:630px;top:405px;height:13px"></div>
<div class="sep" style="left:649px;top:405px;height:13px"></div>
<div class="sep" style="left:682.5px;top:405px;height:13px"></div>
<div class="sep" style="left:730.5px;top:405px;height:13px"></div>
<svg class="a" style="left:626px;top:398px" width="174" height="24">
<g opacity=".85">
<circle cx="12" cy="16" r="2" fill="none" stroke="#b0b0b4" stroke-width="1.3"/>
<path d="M13 14.5 l5 -5.5 q1.2 -1 2 0 q.8 .9 -.2 1.8 l-5 5" fill="#c4c4c8" stroke="#a0a0a4" stroke-width=".6"/>
<path d="M15.5 11 l2 2" stroke="#e8e8ec" stroke-width=".8"/>
</g>
<rect x="28.5" y="9" width="7.5" height="9" fill="#f4f8fc" stroke="#a8b4c0" stroke-width=".5"/>
<ellipse cx="31.7" cy="13" rx="2.5" ry="2.8" fill="#cfe4f4"/>
<path d="M34 16 l2 2" stroke="#d09060" stroke-width="1.2"/>
<rect x="43.3" y="9.5" width="6.4" height="3" fill="#fbfbfb" stroke="#b8b8c0" stroke-width=".5"/>
<rect x="41.8" y="12.3" width="9.4" height="3.2" rx=".8" fill="#a4a6ae" stroke="#8a8c94" stroke-width=".4"/>
<rect x="43.3" y="15.5" width="6.4" height="2.8" fill="#fff" stroke="#b8b8c0" stroke-width=".5"/>
<rect x="61.5" y="9" width="8" height="8.5" rx="1" fill="#eceef2" stroke="#c0c4cc" stroke-width=".7"/><path d="M63.8 10.8 h2.2 q1.6 0 1.6 1.4 q0 1.2 -1.6 1.2 h-2.2 z M63.8 13.4 h2.4 q1.8 0 1.8 1.5 q0 1.3 -1.8 1.3 h-2.4 z" fill="none" stroke="#a8a8a8" stroke-width=".8"/>
<rect x="76.5" y="9" width="8" height="8.5" rx="1" fill="#eceef2" stroke="#c0c4cc" stroke-width=".7"/><path d="M81 10.8 l-1.5 5.5" stroke="#a8a8a8" stroke-width=".9"/>
<rect x="91.5" y="9" width="8" height="8.5" rx="1" fill="#eceef2" stroke="#c0c4cc" stroke-width=".7"/><path d="M93.5 10.8 v3.2 q0 2 2 2 q2 0 2 -2 v-3.2" fill="none" stroke="#a8a8a8" stroke-width=".8"/>
<rect x="109.5" y="9" width="8.5" height="8.5" rx="1" fill="#e4e6ea" stroke="#a8acb4" stroke-width=".7"/><path d="M111 11.5 h5.5 M111 13.5 h4 M111 15.5 h5.5" stroke="#909090" stroke-width=".8"/>
<rect x="124.5" y="9" width="8" height="8.5" rx="1" fill="#eceef2" stroke="#c0c4cc" stroke-width=".7"/><path d="M126 12.5 h5 M126 14.5 h5" stroke="#b0b0b0" stroke-width=".8"/>
<path d="M139.5 10 h1.5 M139.5 13 h1.5 M139.5 16 h1.5 M142.5 10 h5.5 M142.5 13 h5.5 M142.5 16 h5.5" stroke="#9aa0aa" stroke-width="1.2"/>
<path d="M166 9 l1.5 1.5 l-1.5 1.5 M168.5 9 l1.5 1.5 l-1.5 1.5" stroke="#111" stroke-width=".9" fill="none"/>
<path d="M166.5 16.5 h3.5 l-1.75 1.5 z" fill="#111"/>
</svg>
<div class="a" style="left:626.5px;top:421px;width:171.5px;height:185.3px;background:#fff"></div>

</body></html>
